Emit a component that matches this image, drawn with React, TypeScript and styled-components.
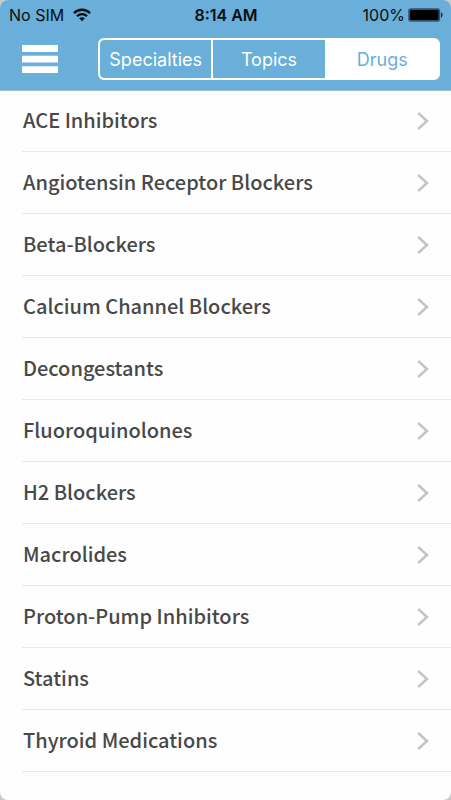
import React, { useState } from "react";
import styled, { createGlobalStyle } from "styled-components";

const blue = "#69afd9";

const GlobalStyle = createGlobalStyle`
  *, *::before, *::after { box-sizing: border-box; }
  html, body, #root { height: 100%; }
  body { margin: 0; background: #c9c9c9; }
`;

const Screen = styled.div`
  min-height: 100%;
  background: #fefefe;
  border-radius: 8px;
  overflow: hidden;
  font-family: Inter, "Liberation Sans", sans-serif;
`;

const Header = styled.header`
  background: ${blue};
  border-bottom: 1px solid #a3bfd8;
`;

const StatusBar = styled.div`
  display: grid;
  grid-template-columns: 1fr auto 1fr;
  align-items: center;
  height: 30px;
  padding: 0 8px 0 9px;
  font-size: 16px;
  line-height: 30px;
  color: #0a0d10;
`;

const StatusGroup = styled.div<{ $end?: boolean }>`
  display: flex;
  align-items: center;
  gap: ${(p) => (p.$end ? 3 : 9)}px;
  justify-content: ${(p) => (p.$end ? "flex-end" : "flex-start")};
`;

const Time = styled.time`
  font-weight: 600;
`;

const NavBar = styled.div`
  display: flex;
  align-items: center;
  gap: 40px;
  padding: 8px 11px 10px 22px;
`;

const MenuButton = styled.button`
  display: flex;
  padding: 0;
  border: 0;
  background: none;
  cursor: pointer;
`;

const Segments = styled.div`
  flex: 1;
  display: grid;
  grid-template-columns: repeat(3, 1fr);
  gap: 2px;
  height: 42px;
  border: 2px solid #fff;
  border-radius: 6px;
  background: #fff;
  overflow: hidden;
`;

const Segment = styled.button<{ $active: boolean }>`
  padding: 0;
  border: 0;
  background: ${(p) => (p.$active ? "#fff" : blue)};
  color: ${(p) => (p.$active ? blue : "#fff")};
  font: 400 18px Inter, "Liberation Sans", sans-serif;
  cursor: pointer;

  &:first-child {
    border-radius: 4px 0 0 4px;
  }

  &:last-child {
    border-radius: 0 4px 4px 0;
  }
`;

const List = styled.ul`
  margin: 0;
  padding: 0 0 0 22px;
  list-style: none;
`;

const Row = styled.li`
  border-bottom: 1px solid #e9e9eb;

  &:first-child a {
    height: 60px;
    padding-bottom: 1px;
  }
`;

const RowLink = styled.a`
  display: flex;
  align-items: center;
  justify-content: space-between;
  height: 61px;
  padding: 0 22px 0 1px;
  color: #484848;
  font: 500 20px/31px "Noto Sans CJK SC", "Noto Sans", sans-serif;
  text-decoration: none;
`;

const RowName = styled.span`
  padding-bottom: 2px;
`;

const MenuIcon = () => (
  <svg width="36" height="28" viewBox="0 0 36 28" aria-hidden="true">
    <path d="M0 0h36v7H0zM0 10.8h36v6.7H0zM0 21.2h36v6.8H0z" fill="#fff" />
  </svg>
);

const WifiIcon = () => (
  <svg width="18" height="14" viewBox="0 0 18 14" aria-label="Wi-Fi">
    <g fill="none" stroke="#0a0d10" strokeWidth="2.3">
      <path d="M1 5.1C5.5.6 12.5.6 17 5.1" />
      <path d="M4 8.3c2.8-2.8 7.2-2.8 10 0" />
    </g>
    <path d="M9 13.2 6.1 10.3c1.6-1.5 4.2-1.5 5.8 0z" fill="#0a0d10" />
  </svg>
);

const BatteryIcon = () => (
  <svg width="35" height="14" viewBox="0 0 35 14" aria-label="Battery full">
    <rect x=".2" y=".2" width="32" height="13.6" rx="2.8" fill="#2f5670" />
    <rect x="2" y="2" width="28.4" height="10" rx="1.2" fill="#000" />
    <path d="M33 4.5c2 .4 2 4.6 0 5z" fill="#122330" />
  </svg>
);

const Chevron = () => (
  <svg width="12" height="18" viewBox="0 0 12 18" aria-hidden="true">
    <path d="M1.2 1 10 9l-8.8 8" fill="none" stroke="#c3c3c8" strokeWidth="2.5" />
  </svg>
);

const tabs = ["Specialties", "Topics", "Drugs"];

const drugs = [
  "ACE Inhibitors",
  "Angiotensin Receptor Blockers",
  "Beta-Blockers",
  "Calcium Channel Blockers",
  "Decongestants",
  "Fluoroquinolones",
  "H2 Blockers",
  "Macrolides",
  "Proton-Pump Inhibitors",
  "Statins",
  "Thyroid Medications",
];

export default function App() {
  const [active, setActive] = useState("Drugs");

  return (
    <>
      <GlobalStyle />
      <Screen>
        <Header>
          <StatusBar>
            <StatusGroup>
              <span>No SIM</span>
              <WifiIcon />
            </StatusGroup>
            <Time>8:14 AM</Time>
            <StatusGroup $end>
              <span>100%</span>
              <BatteryIcon />
            </StatusGroup>
          </StatusBar>
          <NavBar>
            <MenuButton aria-label="Menu">
              <MenuIcon />
            </MenuButton>
            <Segments role="group" aria-label="Category">
              {tabs.map((tab) => (
                <Segment
                  key={tab}
                  $active={tab === active}
                  aria-pressed={tab === active}
                  onClick={() => setActive(tab)}
                >
                  {tab}
                </Segment>
              ))}
            </Segments>
          </NavBar>
        </Header>
        <List>
          {drugs.map((name) => (
            <Row key={name}>
              <RowLink href="#">
                <RowName>{name}</RowName>
                <Chevron />
              </RowLink>
            </Row>
          ))}
        </List>
      </Screen>
    </>
  );
}
